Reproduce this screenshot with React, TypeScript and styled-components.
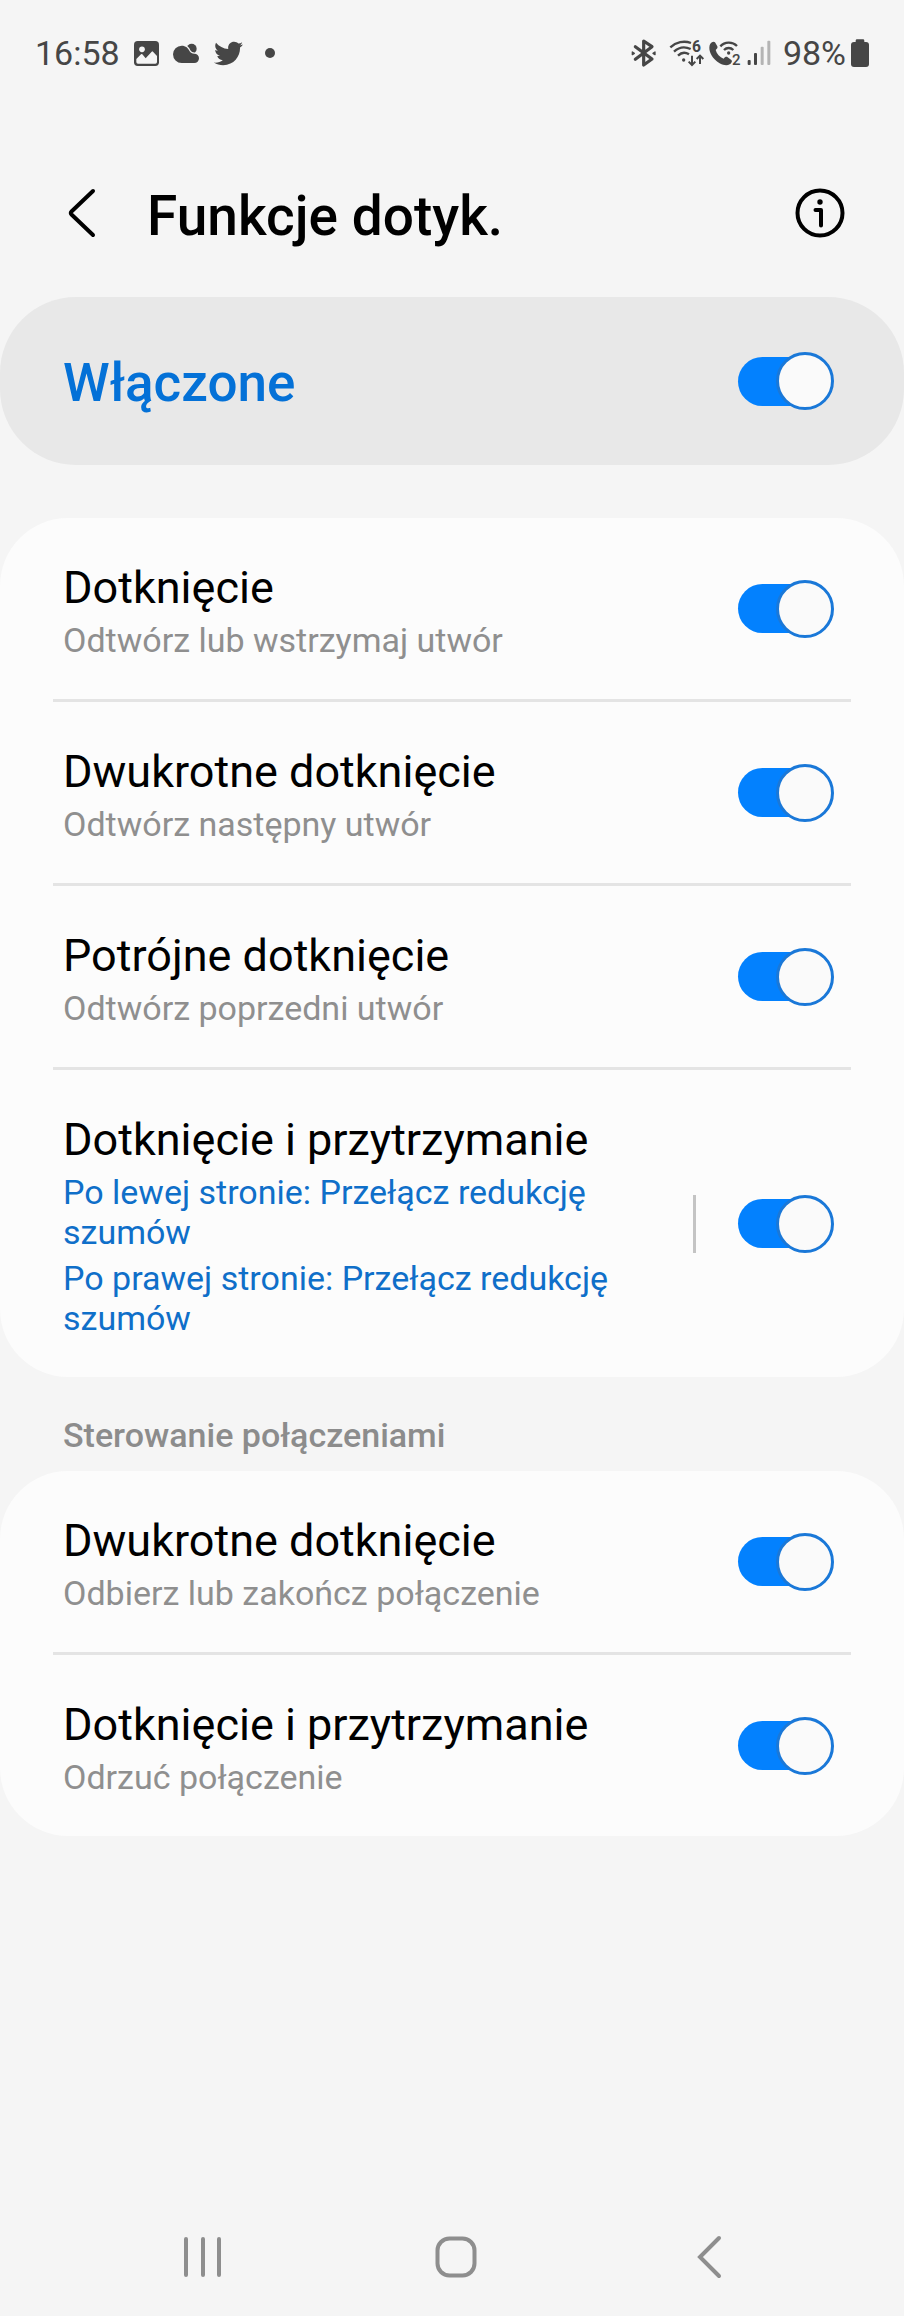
import React from "react";
import styled, { createGlobalStyle } from "styled-components";
import { FaTwitter } from "react-icons/fa";

const INK = "#464646";

const GlobalStyle = createGlobalStyle`
  *, *::before, *::after { box-sizing: border-box; }
  body {
    margin: 0;
    background: #f5f5f5;
    color: #000;
    font-family: Roboto, "Noto Sans", sans-serif;
  }
`;

const Screen = styled.div`
  display: flex;
  flex-direction: column;
  min-height: 100vh;
`;

const StatusBar = styled.div`
  display: flex;
  justify-content: space-between;
  align-items: center;
  height: 106px;
  padding: 0 35px;
  color: ${INK};
  font-size: 34px;
  line-height: 40px;
  svg { display: block; flex: none; overflow: visible; }
`;

const StatusGroup = styled.div<{ $gap: number }>`
  display: flex;
  align-items: center;
  gap: ${(p) => p.$gap}px;
`;

const MoreDot = styled.span`
  width: 10px;
  height: 10px;
  margin-left: 8px;
  border-radius: 50%;
  background: ${INK};
`;

const Header = styled.header`
  display: flex;
  align-items: center;
  height: 191px;
  padding: 22px 58px 0 56px;
`;

const IconButton = styled.button`
  display: flex;
  align-items: center;
  justify-content: center;
  width: 52px;
  height: 52px;
  padding: 0;
  border: 0;
  background: none;
  color: inherit;
  cursor: pointer;
`;

const Title = styled.h1`
  flex: 1;
  margin: 0;
  padding: 6px 0 0 39px;
  font-size: 55px;
  line-height: 64px;
  font-weight: 500;
`;

const Main = styled.main`
  flex: 1;
`;

const MasterRow = styled.label`
  display: flex;
  align-items: center;
  justify-content: space-between;
  height: 168px;
  padding: 0 70px 0 63px;
  border-radius: 76px;
  background: #e8e8e8;
  color: #0471d7;
  font-size: 53px;
  line-height: 64px;
  font-weight: 500;
  cursor: pointer;
`;

const MasterText = styled.span`
  padding-top: 3px;
`;

const Card = styled.section`
  padding: 0 53px;
  border-radius: 68px;
  background: #fcfcfc;
`;

const FirstCard = styled(Card)`
  margin-top: 53px;
`;

const Row = styled.div`
  display: flex;
  align-items: center;
  padding: 0 17px 0 10px;
  & + & {
    border-top: 3px solid #e4e4e4;
  }
`;

const RowText = styled.label`
  flex: 1;
  padding: 44px 0 39px;
  cursor: pointer;
`;

const RowTitle = styled.span`
  display: block;
  margin-bottom: 6px;
  font-size: 45px;
  line-height: 52px;
`;

const RowNote = styled.span<{ $accent?: boolean }>`
  display: block;
  max-width: 560px;
  color: ${(p) => (p.$accent ? "#0f6fc9" : "#8f8f8f")};
  font-size: 34px;
  line-height: 40px;
  & + & { margin-top: 6px; }
`;

const Separator = styled.span`
  width: 3px;
  height: 58px;
  margin-right: 42px;
  background: #c4c4c4;
`;

const Switch = styled.input`
  appearance: none;
  display: grid;
  align-items: center;
  flex: none;
  width: 96px;
  height: 58px;
  margin: 0;
  cursor: pointer;
  &::before,
  &::after {
    content: "";
    grid-area: 1 / 1;
  }
  &::before {
    height: 49px;
    margin-right: 8px;
    border-radius: 25px;
    background: #bdbdbd;
  }
  &::after {
    width: 58px;
    height: 58px;
    border: 3px solid #8f8f8f;
    border-radius: 50%;
    background: #fafafa;
  }
  &:checked::before { background: #0381fe; }
  &:checked::after {
    justify-self: end;
    border-color: #1a78d8;
  }
`;

const SectionTitle = styled.h2`
  margin: 0;
  padding: 38px 63px 16px;
  color: #8c8c8c;
  font-size: 34px;
  line-height: 40px;
  font-weight: 500;
`;

const NavBar = styled.nav`
  display: grid;
  grid-template-columns: repeat(3, 1fr);
  justify-items: center;
  align-items: center;
  height: 118px;
  padding: 0 68px 0 76px;
  color: #8e8e8e;
`;

const ImageIcon = () => (
  <svg width="25" height="25" viewBox="343 63 75 75" aria-hidden="true">
    <rect x="343" y="63" width="75" height="75" rx="11" fill={INK} />
    <circle cx="367" cy="88" r="8.5" fill="#f5f5f5" />
    <path d="M350 117 364 103q2-2 4 0l10 12 18-20q2-2 4 0l12 13v18q0 5-5 5H355q-5 0-5-5z" fill="#f5f5f5" />
  </svg>
);

const CloudIcon = () => (
  <svg width="27" height="25" viewBox="461 63 81 75" aria-hidden="true">
    <circle cx="517" cy="86" r="15" fill={INK} />
    <path
      d="M487 77c12 0 20 7 24 17 3 5 7 7 14 7a14 14 0 0 1 0 28H487a26 26 0 0 1 0-52z"
      fill={INK}
      stroke="#f5f5f5"
      strokeWidth="7"
      paintOrder="stroke"
    />
  </svg>
);

const BluetoothIcon = () => (
  <svg width="26" height="28" viewBox="61 56 78 84" fill="none" stroke={INK} strokeWidth="9.5" strokeLinejoin="round" strokeLinecap="round" aria-hidden="true">
    <path d="M74 79 124 116 99 134V62l25 17-50 38" />
    <path d="m65 95 6 4-6 4zM133 95l-6 4 6 4z" fill={INK} strokeWidth="4" />
  </svg>
);

const WifiIcon = () => (
  <svg width="36" height="36" viewBox="175 44 108 108" fill="none" stroke={INK} strokeWidth="7" aria-hidden="true">
    <path d="M179 81c17-16 41-21 62-13" />
    <path d="M190 94c14-13 33-16 50-8" />
    <path d="M202 106c9-9 22-11 33-4" />
    <circle cx="219" cy="119" r="5" fill={INK} stroke="none" />
    <path d="M244 106v28M234 124l10 10 10-10M268 131v-25M258 116l10-10 10 10" strokeWidth="6" />
    <text x="244" y="95" fill={INK} stroke="none" fontSize="47" fontWeight="700">6</text>
  </svg>
);

const WifiCallIcon = () => (
  <svg width="32" height="36" viewBox="293 44 96 108" fill="none" stroke={INK} strokeWidth="7" aria-hidden="true">
    <path
      d="M297 70c4-5 10-8 14-4l7 12c2 4-1 8-5 11 3 12 12 21 24 26 4-5 8-7 12-4l11 8c4 4 0 10-5 13-12 7-33-1-46-16-13-14-19-34-12-46z"
      fill={INK}
      stroke="none"
    />
    <path d="M327 78c13-14 36-15 50-1" />
    <path d="M338 89c8-8 20-8 28 0" />
    <circle cx="352" cy="98" r="5" fill={INK} stroke="none" />
    <text x="362" y="135" fill={INK} stroke="none" fontSize="45" fontWeight="500">2</text>
  </svg>
);

const SignalIcon = styled(({ className }: { className?: string }) => (
  <svg className={className} width="24" height="28" viewBox="410 56 72 84" aria-hidden="true">
    <rect x="412" y="119" width="9" height="15" rx="3" fill={INK} />
    <rect x="431" y="98" width="9" height="36" rx="3" fill={INK} />
    <rect x="451" y="79" width="9" height="55" rx="3" fill="#b4b4b4" />
    <rect x="471" y="61" width="9" height="73" rx="3" fill="#b4b4b4" />
  </svg>
))`
  margin-left: 2px;
`;

const BatteryIcon = () => (
  <svg width="18" height="28" viewBox="723 56 54 84" fill={INK} aria-hidden="true">
    <rect x="737" y="57" width="26" height="16" rx="4" />
    <rect x="723" y="65" width="54" height="75" rx="9" />
  </svg>
);

type Item = { id: string; title: string; notes: string[]; accent?: boolean };

const touchItems: Item[] = [
  { id: "tap", title: "Dotknięcie", notes: ["Odtwórz lub wstrzymaj utwór"] },
  { id: "double", title: "Dwukrotne dotknięcie", notes: ["Odtwórz następny utwór"] },
  { id: "triple", title: "Potrójne dotknięcie", notes: ["Odtwórz poprzedni utwór"] },
  {
    id: "hold",
    title: "Dotknięcie i przytrzymanie",
    notes: ["Po lewej stronie: Przełącz redukcję szumów", "Po prawej stronie: Przełącz redukcję szumów"],
    accent: true,
  },
];

const callItems: Item[] = [
  { id: "call-double", title: "Dwukrotne dotknięcie", notes: ["Odbierz lub zakończ połączenie"] },
  { id: "call-hold", title: "Dotknięcie i przytrzymanie", notes: ["Odrzuć połączenie"] },
];

const SettingRow = ({ id, title, notes, accent }: Item) => (
  <Row>
    <RowText htmlFor={id}>
      <RowTitle>{title}</RowTitle>
      {notes.map((note) => (
        <RowNote key={note} $accent={accent}>{note}</RowNote>
      ))}
    </RowText>
    {accent && <Separator />}
    <Switch id={id} type="checkbox" role="switch" defaultChecked />
  </Row>
);

export default function App() {
  return (
    <Screen>
      <GlobalStyle />
      <StatusBar>
        <StatusGroup $gap={14}>
          <span>16:58</span>
          <ImageIcon />
          <CloudIcon />
          <FaTwitter size={29} />
          <MoreDot />
        </StatusGroup>
        <StatusGroup $gap={12}>
          <BluetoothIcon />
          <StatusGroup $gap={4}>
            <WifiIcon />
            <WifiCallIcon />
            <SignalIcon />
          </StatusGroup>
          <StatusGroup $gap={5}>
            <span>98%</span>
            <BatteryIcon />
          </StatusGroup>
        </StatusGroup>
      </StatusBar>

      <Header>
        <IconButton aria-label="Wstecz">
          <svg width="30" height="52" viewBox="0 0 30 52" fill="none" stroke="currentColor" strokeWidth="4" strokeLinecap="round" strokeLinejoin="round">
            <path d="M26 4 4.500 24.500q-1.500 1.500 0 3L26 48" />
          </svg>
        </IconButton>
        <Title>Funkcje dotyk.</Title>
        <IconButton aria-label="Informacje">
          <svg width="50" height="50" viewBox="0 0 50 50" fill="none" stroke="currentColor" strokeWidth="4" strokeLinecap="round" strokeLinejoin="round">
            <circle cx="25" cy="25" r="22.500" />
            <path d="M20.500 22H26v15.500" />
            <circle cx="25" cy="14" r="2.700" fill="currentColor" stroke="none" />
          </svg>
        </IconButton>
      </Header>

      <Main>
        <MasterRow htmlFor="master">
          <MasterText>Włączone</MasterText>
          <Switch id="master" type="checkbox" role="switch" defaultChecked />
        </MasterRow>
        <FirstCard>
          {touchItems.map((item) => <SettingRow key={item.id} {...item} />)}
        </FirstCard>
        <SectionTitle>Sterowanie połączeniami</SectionTitle>
        <Card>
          {callItems.map((item) => <SettingRow key={item.id} {...item} />)}
        </Card>
      </Main>

      <NavBar>
        <IconButton aria-label="Ostatnie">
          <svg width="42" height="42" viewBox="0 0 42 42" stroke="currentColor" strokeWidth="4" strokeLinecap="round">
            <path d="M4 3v36M21 3v36M37 3v36" />
          </svg>
        </IconButton>
        <IconButton aria-label="Ekran główny">
          <svg width="42" height="42" viewBox="0 0 42 42" fill="none" stroke="currentColor" strokeWidth="4">
            <rect x="2.500" y="2.500" width="37" height="37" rx="12" />
          </svg>
        </IconButton>
        <IconButton aria-label="Wróć">
          <svg width="26" height="44" viewBox="0 0 26 44" fill="none" stroke="currentColor" strokeWidth="4" strokeLinecap="round" strokeLinejoin="miter">
            <path d="M23 3 4 22l19 19" />
          </svg>
        </IconButton>
      </NavBar>
    </Screen>
  );
}
